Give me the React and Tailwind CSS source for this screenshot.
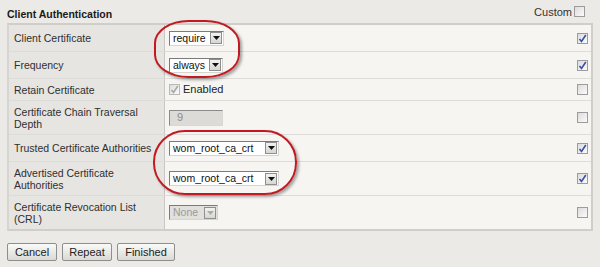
import React from 'react';

const font = { fontFamily: '"Liberation Sans", Arial, sans-serif' };

function Check({ checked, disabled }) {
  return (
    <span
      className={`inline-flex h-[11px] w-[11px] items-center justify-center border ${
        disabled ? 'border-[#b8b8b4]' : 'border-[#9c9c9c]'
      } bg-gradient-to-br from-[#dcdcdc] to-[#fbfbfb]`}
    >
      {checked && (
        <svg width="9" height="9" viewBox="0 0 9 9">
          <path
            d="M1.5 5 L3.5 7.5 L7.8 1"
            fill="none"
            stroke={disabled ? '#a8a8a8' : '#3b4fa3'}
            strokeWidth="1.6"
          />
        </svg>
      )}
    </span>
  );
}

function Select({ value, width, disabled }) {
  return (
    <div
      className={`flex h-[15px] items-center border border-t-[#7b7b7b] border-l-[#7b7b7b] border-r-[#d4d4d0] border-b-[#d4d4d0] text-[10.5px] ${
        disabled ? 'bg-[#e1e0dc] text-[#9a9a9a]' : 'bg-white text-[#111]'
      } ${width}`}
    >
      <span className="flex-1 pl-[3px] leading-none">{value}</span>
      <span className="mr-px flex h-[12px] w-[12px] items-center justify-center border border-[#8f8f8f] bg-gradient-to-b from-[#f2f2f0] to-[#d6d6d2]">
        <svg width="7" height="4" viewBox="0 0 7 4">
          <path d="M0 0 H7 L3.5 4 Z" fill={disabled ? '#aaa' : '#111'} />
        </svg>
      </span>
    </div>
  );
}

const rows = [
  { label: 'Client Certificate', h: 'h-[26px]', control: <Select value="require" width="w-[55px]" />, checked: true },
  { label: 'Frequency', h: 'h-[27px]', control: <Select value="always" width="w-[54px]" />, checked: true },
  {
    label: 'Retain Certificate',
    h: 'h-[22px]',
    control: (
      <div className="flex items-center gap-[3px] text-[11px] text-[#222]">
        <Check checked disabled />
        <span>Enabled</span>
      </div>
    ),
    checked: false,
  },
  {
    label: (
      <>
        Certificate Chain Traversal
        <br />
        Depth
      </>
    ),
    h: 'h-[34px]',
    control: (
      <div className="flex h-[16px] w-[54px] items-center border border-t-[#8a8a8a] border-l-[#8a8a8a] border-r-[#d8d8d4] border-b-[#d8d8d4] bg-[#dcdbd7] pl-[7px] text-[11px] text-[#8c8c8c]">
        9
      </div>
    ),
    checked: false,
  },
  { label: 'Trusted Certificate Authorities', h: 'h-[27px]', control: <Select value="wom_root_ca_crt" width="w-[110px]" />, checked: true },
  {
    label: (
      <>
        Advertised Certificate
        <br />
        Authorities
      </>
    ),
    h: 'h-[34px]',
    control: <Select value="wom_root_ca_crt" width="w-[110px]" />,
    checked: true,
  },
  {
    label: (
      <>
        Certificate Revocation List
        <br />
        (CRL)
      </>
    ),
    h: 'h-[34px]',
    control: <Select value="None" width="w-[49px]" disabled />,
    checked: false,
  },
];

function Button({ children, width }) {
  return (
    <button className={`h-[18px] ${width} rounded-[2px] border border-[#8e8e8c] bg-gradient-to-b from-[#fafaf8] to-[#d9d9d5] text-[11px] leading-none text-[#222]`}>
      {children}
    </button>
  );
}

export default function App() {
  return (
    <div className="relative h-[267px] w-[600px] overflow-hidden bg-[#ebeae6] text-[10.5px] text-[#2a2a2a]" style={font}>
      {/* Header */}
      <div className="flex h-[23px] justify-between pl-[7px] pr-[15px]">
        <div className="pt-[9px] text-[10.5px] font-bold leading-none text-[#1a1a1a]">Client Authentication</div>
        <div className="flex items-start gap-[2px] pt-[6px]">
          <span className="text-[11px] leading-[12px] text-[#333]">Custom</span>
          <Check />
        </div>
      </div>

      {/* Table */}
      <div className="ml-[7px] w-[586px] border-2 border-[#cfcec9] border-l-[#d6d5d1]">
        {rows.map((r, i) => (
          <div key={i} className={`flex ${r.h} ${i > 0 ? 'border-t border-[#dddcd8]' : ''}`}>
            <div className="flex w-[156px] items-center border-r border-[#c8c7c3] bg-[#e6e5e1] pl-[5px] leading-[12px] text-[#2f2f2f]">
              {r.label}
            </div>
            <div className="flex flex-1 items-center justify-between bg-[#f6f5f2] pl-[4px] pr-[3px]">
              {r.control}
              <Check checked={r.checked} />
            </div>
          </div>
        ))}
      </div>

      {/* Buttons */}
      <div className="mt-[12px] flex gap-[5px] pl-[7px]">
        <Button width="w-[50px]">Cancel</Button>
        <Button width="w-[50px]">Repeat</Button>
        <Button width="w-[58px]">Finished</Button>
      </div>

      {/* Red annotation ovals */}
      <div className="absolute left-[154px] top-[20px] h-[58px] w-[86px] rounded-[40%] border-2 border-[#c01a22] shadow-[2px_2px_3px_rgba(0,0,0,0.35)]" />
      <div className="absolute left-[153px] top-[130px] h-[65px] w-[144px] rounded-[32px] border-2 border-[#c01a22] shadow-[2px_2px_3px_rgba(0,0,0,0.35)]" />
    </div>
  );
}
